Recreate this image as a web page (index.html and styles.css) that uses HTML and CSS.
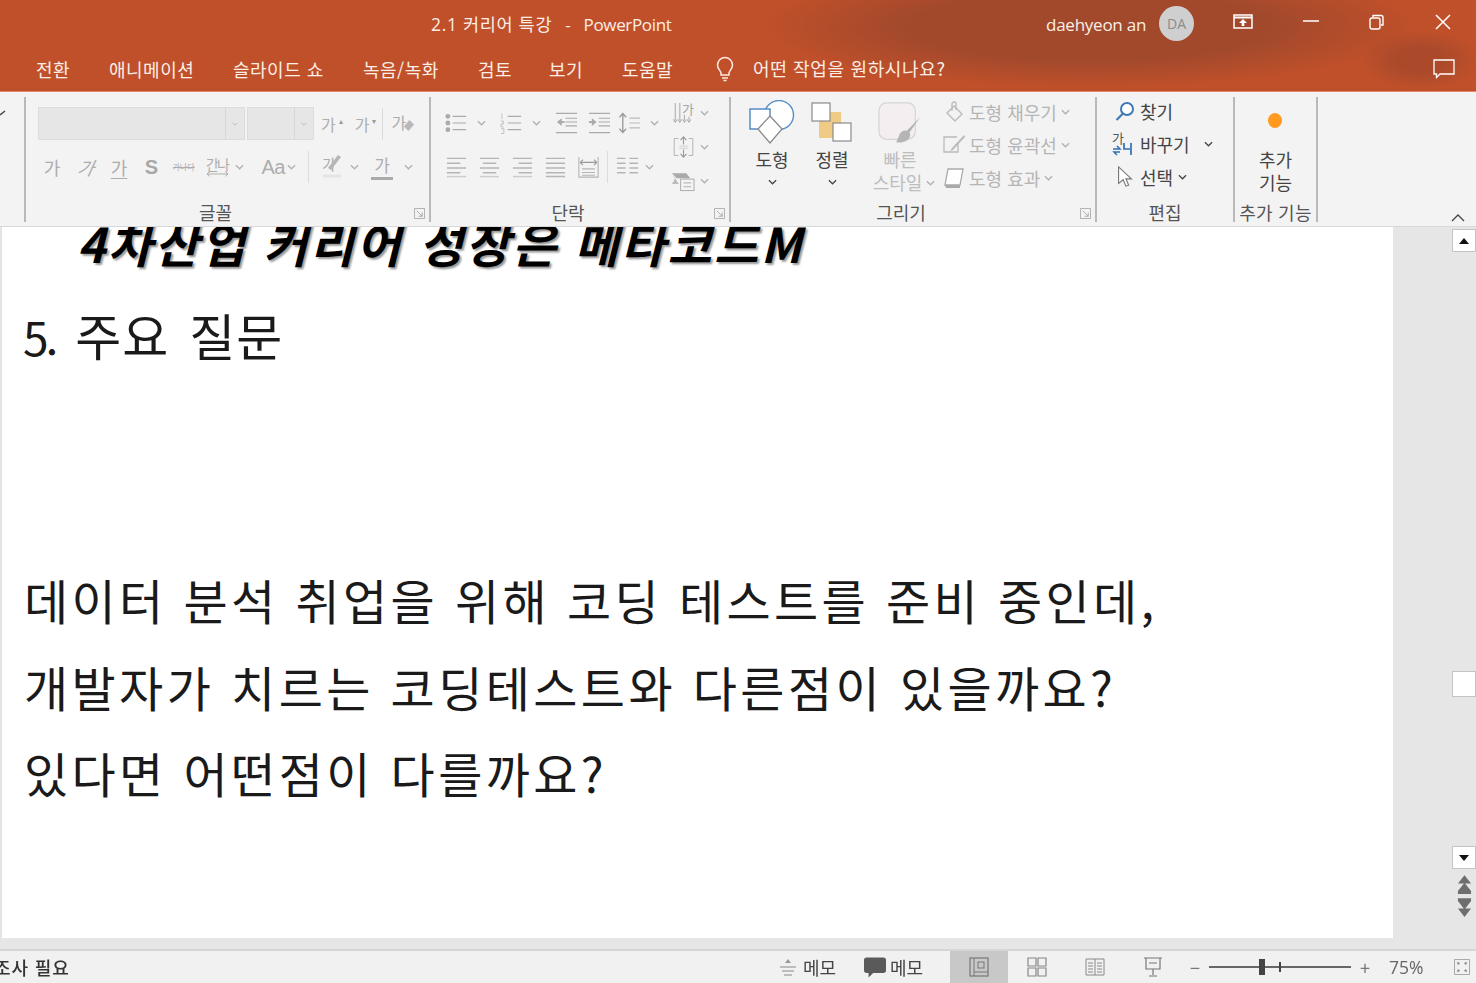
FILE: index.html
```html
<!DOCTYPE html>
<html lang="ko">
<head>
<meta charset="utf-8">
<title>2.1 커리어 특강 - PowerPoint</title>
<link rel="stylesheet" href="styles.css">
</head>
<body>
<svg class="defs" width="0" height="0" aria-hidden="true">
  <symbol id="chev" viewBox="0 0 10 6"><path d="M1 1l4 4 4-4" fill="none" stroke="currentColor" stroke-width="1.4"/></symbol>
  <symbol id="launch" viewBox="0 0 12 12"><path d="M.5.5h11v11M.5.5v11h11M3 3l6 6M9 5v4H5" fill="none" stroke="currentColor"/></symbol>
</svg>
<div class="app">
  <header class="head">
    <div class="titlebar">
      <div class="doc-title"><span class="doc-ko">2.1 커리어 특강</span> &nbsp;-&nbsp; PowerPoint</div>
      <div class="user-name">daehyeon an</div>
      <div class="avatar">DA</div>
      <svg class="win win-display" viewBox="0 0 20 16"><path d="M1 1h18v13H1z" fill="none" stroke="#fff" stroke-width="1.5"/><path d="M1 3.5h18" stroke="#fff" stroke-width="2"/><path d="M10 5l-4 4h2.700v3h2.600V9H14z" fill="#fff"/></svg>
      <svg class="win win-min" viewBox="0 0 16 16"><path d="M0 8h16" stroke="#fff" stroke-width="1.500"/></svg>
      <svg class="win win-restore" viewBox="0 0 16 16"><rect x="1" y="4" width="10" height="11" rx="2" fill="none" stroke="#fff" stroke-width="1.400"/><path d="M4 3.500V1.500h8a2 2 0 0 1 2 2V11h-2" fill="none" stroke="#fff" stroke-width="1.400"/></svg>
      <svg class="win win-close" viewBox="0 0 16 16"><path d="M1 1l14 14M15 1L1 15" stroke="#fff" stroke-width="1.500"/></svg>
    </div>
    <nav class="tabs">
      <span class="tab t1">전환</span>
      <span class="tab t2">애니메이션</span>
      <span class="tab t3">슬라이드 쇼</span>
      <span class="tab t4">녹음/녹화</span>
      <span class="tab t5">검토</span>
      <span class="tab t6">보기</span>
      <span class="tab t7">도움말</span>
      <svg class="bulb" viewBox="0 0 18 26"><path d="M9 1.500a7.500 7.500 0 0 0-7.500 7.500c0 3.500 2.500 5 3.500 8v2h8v-2c1-3 3.500-4.500 3.500-8A7.500 7.500 0 0 0 9 1.500z" fill="none" stroke="#fbe9df" stroke-width="1.500"/><path d="M6 22h6M7.500 24.500h3" stroke="#fbe9df" stroke-width="1.500"/></svg>
      <span class="tell">어떤 작업을 원하시나요?</span>
      <svg class="comment" viewBox="0 0 22 20"><path d="M1 1h20v14H7l-3.500 3.500V15H1z" fill="none" stroke="#fff" stroke-width="1.300"/></svg>
    </nav>
  </header>

  <section class="ribbon">
    <div class="group g-clip"><svg class="clip-mark" viewBox="0 0 6 6"><path d="M0 5l5-4" stroke="#444" stroke-width="1.500"/></svg></div>

    <div class="group g-font">
      <div class="font-row1">
        <div class="combo c-name"><span class="combo-drop"><svg class="chv tiny"><use href="#chev"/></svg></span></div>
        <div class="combo c-size"><span class="combo-drop"><svg class="chv tiny"><use href="#chev"/></svg></span></div>
        <span class="d gl fs1">가<i class="up">▴</i></span>
        <span class="d gl fs2">가<i class="up">▾</i></span>
        <span class="vsep short"></span>
        <span class="d gl eraser">가<svg viewBox="0 0 14 14" class="eraser-ic"><path d="M8 1l5 5-6 7-5-5z" fill="#b9b9b9"/></svg></span>
      </div>
      <div class="font-row2">
        <span class="d gl">가</span>
        <span class="d gl it">가</span>
        <span class="d gl un">가</span>
        <span class="d gl s-bold">S</span>
        <span class="d strike">가나다</span>
        <span class="d gl spacing">간나<svg viewBox="0 0 24 6" class="spacing-ar"><path d="M1 3h22M4 .5L1 3l3 2.500M20 .5L23 3l-3 2.500" fill="none" stroke="#aaa"/></svg></span>
        <svg class="chv"><use href="#chev"/></svg>
        <span class="d aa">Aa</span>
        <svg class="chv"><use href="#chev"/></svg>
        <span class="vsep tall"></span>
        <span class="d gl hl">가<svg viewBox="0 0 20 26" class="hl-ic"><path d="M15 2l3 2-10 13-3-2z" fill="#b5b5b5"/><path d="M0 23h18" stroke="#e4e4e4" stroke-width="3"/></svg></span>
        <svg class="chv"><use href="#chev"/></svg>
        <span class="d gl color">가<b class="color-bar"></b></span>
        <svg class="chv"><use href="#chev"/></svg>
      </div>
      <div class="glabel">글꼴</div>
      <svg class="launch"><use href="#launch"/></svg>
    </div>

    <div class="group g-para">
      <div class="para-left">
        <div class="para-row1">
          <svg class="ic" viewBox="0 0 24 22"><g fill="#aaa"><circle cx="3" cy="4" r="2.500"/><circle cx="3" cy="11" r="2.500"/><circle cx="3" cy="18" r="2.500"/></g><path d="M8 4h14M8 11h14M8 18h14" stroke="#aaa" stroke-width="1.300"/></svg>
          <svg class="chv"><use href="#chev"/></svg>
          <svg class="ic" viewBox="0 0 24 22"><path d="M8 4h14M8 11h14M8 18h14" stroke="#aaa" stroke-width="1.300"/><path d="M2 1v6M1 9h2.500v3H1v3h3M1 17h3v5H1" fill="none" stroke="#bbb" stroke-width=".9"/></svg>
          <svg class="chv"><use href="#chev"/></svg>
          <svg class="ic" viewBox="0 0 24 22"><path d="M1 1h22M11 6h12M11 10h12M11 14h12M1 21h22" stroke="#aaa" stroke-width="1.200"/><path d="M2 10l5-4v8z" fill="#aaa"/><path d="M6 10h4" stroke="#aaa" stroke-width="2"/></svg>
          <svg class="ic" viewBox="0 0 24 22"><path d="M1 1h22M11 6h12M11 10h12M11 14h12M1 21h22" stroke="#aaa" stroke-width="1.200"/><path d="M9 10L4 6v8z" fill="#aaa"/><path d="M1 10h4" stroke="#aaa" stroke-width="2"/></svg>
          <svg class="ic ic-ls" viewBox="0 0 24 24"><path d="M5 2v20M1.500 6L5 2l3.500 4M1.500 18L5 22l3.500-4" fill="none" stroke="#999" stroke-width="1.400"/><path d="M12 7h11M12 12h11M12 17h11" stroke="#bbb" stroke-width="1.300"/></svg>
          <svg class="chv"><use href="#chev"/></svg>
        </div>
        <div class="para-row2">
          <svg class="ic" viewBox="0 0 24 22"><path d="M2 2h20M2 7h14M2 12h20M2 17h14" stroke="#b5b5b5" stroke-width="1.500"/><path d="M2 21h20" stroke="#ccc" stroke-width="1.500"/></svg>
          <svg class="ic" viewBox="0 0 24 22"><path d="M2 2h20M5 7h14M2 12h20M5 17h14" stroke="#b5b5b5" stroke-width="1.500"/><path d="M2 21h20" stroke="#ccc" stroke-width="1.500"/></svg>
          <svg class="ic" viewBox="0 0 24 22"><path d="M2 2h20M8 7h14M2 12h20M8 17h14" stroke="#b5b5b5" stroke-width="1.500"/><path d="M2 21h20" stroke="#ccc" stroke-width="1.500"/></svg>
          <svg class="ic" viewBox="0 0 24 22"><path d="M2 2h20M2 7h20M2 12h20M2 17h20M2 21h20" stroke="#b5b5b5" stroke-width="1.500"/></svg>
          <svg class="ic" viewBox="0 0 24 24"><path d="M1.500 1v22h21V1M5 14h14M5 18h14M5 21h14" fill="none" stroke="#b5b5b5" stroke-width="1.200"/><path d="M3 7h18M6 4L3 7l3 3M18 4l3 3-3 3" fill="none" stroke="#999" stroke-width="1.200"/></svg>
          <span class="vsep tall"></span>
          <svg class="ic" viewBox="0 0 24 22"><path d="M1 2h9M1 7h9M1 12h9M1 17h9M14 2h9M14 7h9M14 12h9M14 17h9" stroke="#b5b5b5" stroke-width="1.500"/></svg>
          <svg class="chv"><use href="#chev"/></svg>
        </div>
      </div>
      <div class="para-right">
        <div class="pr-item">
          <span class="textdir"><svg viewBox="0 0 24 24" class="ic"><path d="M3 1v19M8 1v19M13 14v6M18 16v4M1 19l2 3 2-3M6 19l2 3 2-3M11 19l2 3 2-3M16 19l2 3 2-3" fill="none" stroke="#aaa" stroke-width="1.100"/></svg><em class="td-g">가</em></span>
          <svg class="chv"><use href="#chev"/></svg>
        </div>
        <div class="pr-item">
          <svg class="ic" viewBox="0 0 24 26"><path d="M6 3H1v20h5M18 3h5v20h-5" fill="none" stroke="#b0b0b0" stroke-width="1.100"/><path d="M12 1v9M8.500 5L12 1l3.500 4M12 16v9M8.500 21l3.500 4 3.500-4" fill="none" stroke="#999" stroke-width="1.300"/><path d="M7 12h10M7 14.500h10" stroke="#ccc"/></svg>
          <svg class="chv"><use href="#chev"/></svg>
        </div>
        <div class="pr-item">
          <svg class="ic" viewBox="0 0 24 22"><path d="M0 3h15l4 5H5z" fill="#aaa"/><path d="M0 3l3 6-3 5h7" fill="#bbb"/><rect x="9" y="9" width="14" height="12" fill="#f3f3f3" stroke="#aaa"/><path d="M12 13h8M12 17h8" stroke="#aaa"/></svg>
          <svg class="chv"><use href="#chev"/></svg>
        </div>
      </div>
      <div class="glabel">단락</div>
      <svg class="launch"><use href="#launch"/></svg>
    </div>

    <div class="group g-draw">
      <div class="big b-shape">
        <svg class="big-ic" viewBox="0 0 46 44"><circle cx="30" cy="15" r="14.500" fill="#fff" stroke="#5b8fc7" stroke-width="1.400"/><rect x="1" y="9" width="20" height="20" fill="#fff" stroke="#4a86c5" stroke-width="1.400"/><path d="M21 16l12 13-12 14L9 29z" fill="#fff" stroke="#8a8a8a" stroke-width="1.300"/></svg>
        <span class="big-t">도형</span>
        <svg class="chv dark"><use href="#chev"/></svg>
      </div>
      <div class="big b-arr">
        <svg class="big-ic" viewBox="0 0 42 42"><rect x="8" y="10" width="22" height="26" fill="#efcb85"/><rect x="1" y="1" width="18" height="18" fill="#fff" stroke="#8a8a8a" stroke-width="1.200"/><rect x="22" y="21" width="18" height="18" fill="#fff" stroke="#8a8a8a" stroke-width="1.200"/></svg>
        <span class="big-t">정렬</span>
        <svg class="chv dark"><use href="#chev"/></svg>
      </div>
      <div class="big b-style">
        <svg class="big-ic" viewBox="0 0 46 46"><rect x="1" y="1" width="38" height="38" rx="8" fill="#f5eef0" stroke="#d5d5d5" stroke-width="1.300"/><path d="M44 16L30 30c-3-1-6 1-7 3l-4 9c6 1 12-1 14-5 1-2 1-3 0-5z" fill="#b5b5b5"/></svg>
        <span class="big-t off">빠른</span>
        <span class="big-t off st2">스타일<svg class="chv inl"><use href="#chev"/></svg></span>
      </div>
      <div class="draw-list">
        <div class="dl-item">
          <svg class="dl-ic" viewBox="0 0 22 22"><path d="M11 5l8 8-7 7-8-8z" fill="none" stroke="#bbb" stroke-width="1.400"/><path d="M9 10V3a2 2 0 0 1 4 0v6" fill="none" stroke="#bbb" stroke-width="1.300"/></svg>
          <span>도형 채우기</span><svg class="chv"><use href="#chev"/></svg>
        </div>
        <div class="dl-item">
          <svg class="dl-ic" viewBox="0 0 22 22"><path d="M14 3H1v15h14V9" fill="none" stroke="#bbb" stroke-width="1.300"/><path d="M21 1L9 14l-2 3 3-1L22 3z" fill="#bbb"/></svg>
          <span>도형 윤곽선</span><svg class="chv"><use href="#chev"/></svg>
        </div>
        <div class="dl-item">
          <svg class="dl-ic" viewBox="0 0 22 22"><path d="M5 2h15l-3 16H2z" fill="#fff" stroke="#aaa" stroke-width="1.300"/><path d="M2 18h15v3H3z" fill="#aaa"/></svg>
          <span>도형 효과</span><svg class="chv"><use href="#chev"/></svg>
        </div>
      </div>
      <div class="glabel">그리기</div>
      <svg class="launch"><use href="#launch"/></svg>
    </div>

    <div class="group g-edit">
      <div class="ed-item">
        <svg class="ed-ic" viewBox="0 0 20 20"><circle cx="12" cy="8" r="6" fill="#fff" stroke="#3f78b5" stroke-width="2"/><path d="M8 12.500L1.500 19" stroke="#3f78b5" stroke-width="2.200"/></svg>
        <span>찾기</span>
      </div>
      <div class="ed-item">
        <span class="repl"><em class="repl-g">가</em><svg class="repl-a" viewBox="0 0 22 14"><path d="M1 7h7L5 4M8 10H2l3 3" fill="none" stroke="#2f6fb5" stroke-width="1.500"/><path d="M12 1v6h6M19 1v12" fill="none" stroke="#2f6fb5" stroke-width="1.700"/></svg></span>
        <span>바꾸기</span><svg class="chv dark gap-l"><use href="#chev"/></svg>
      </div>
      <div class="ed-item">
        <svg class="ed-ic" viewBox="0 0 20 24"><path d="M3 1v18l5-4 3 7 3-1-3-7h6z" fill="#fff" stroke="#777" stroke-width="1.200"/></svg>
        <span>선택</span><svg class="chv dark"><use href="#chev"/></svg>
      </div>
      <div class="glabel">편집</div>
    </div>

    <div class="group g-add">
      <span class="dot"></span>
      <span class="add-t">추가</span>
      <span class="add-t">기능</span>
      <div class="glabel">추가 기능</div>
    </div>

    <svg class="collapse" viewBox="0 0 14 8"><path d="M1 7l6-6 6 6" fill="none" stroke="#444" stroke-width="1.300"/></svg>
  </section>

  <main class="work">
    <article class="slide">
      <h1 class="slide-head">4차산업 커리어 성장은 메타코드M</h1>
      <h2 class="slide-sub"><span class="num">5.</span> 주요 질문</h2>
      <div class="slide-body">
        <p>데이터 분석 취업을 위해 코딩 테스트를 준비 중인데,</p>
        <p>개발자가 치르는 코딩테스트와 다른점이 있을까요?</p>
        <p>있다면 어떤점이 다를까요?</p>
      </div>
    </article>
    <div class="scroll">
      <div class="sb-btn"><i class="tri-up"></i></div>
      <div class="sb-track"><div class="sb-thumb"></div></div>
      <div class="sb-btn"><i class="tri-down"></i></div>
      <svg class="sb-page" viewBox="0 0 16 20"><path d="M8 0l7 9H1zM8 8l7 9v3H1v-3z" fill="#6e6e6e"/></svg>
      <svg class="sb-page" viewBox="0 0 16 20"><path d="M1 0h14v3L8 12 1 3zM1 11h14l-7 9z" fill="#6e6e6e"/></svg>
    </div>
  </main>

  <footer class="status">
    <span class="st-left">조사 필요</span>
    <svg class="st-ic notes" viewBox="0 0 18 18"><path d="M9 1l3 4H6z" fill="#999"/><path d="M1 9h16M3 13h12M5 17h8" stroke="#aaa" stroke-width="1.300"/></svg>
    <span class="st-t">메모</span>
    <svg class="st-ic bubble" viewBox="0 0 24 22"><path d="M3 0h18a3 3 0 0 1 3 3v11a3 3 0 0 1-3 3H10l-5 5v-5H3a3 3 0 0 1-3-3V3a3 3 0 0 1 3-3z" fill="#5a5a5a"/></svg>
    <span class="st-t">메모</span>
    <span class="view active"><svg viewBox="0 0 20 20"><rect x="1" y="1" width="18" height="18" fill="none" stroke="#777" stroke-width="1.200"/><path d="M5 1v18M5 15h14" stroke="#777"/><rect x="9" y="5" width="6" height="6" fill="none" stroke="#777"/></svg></span>
    <span class="view"><svg viewBox="0 0 20 20"><path d="M1 1h8v8H1zM11 1h8v8h-8zM1 11h8v8H1zM11 11h8v8h-8z" fill="none" stroke="#888" stroke-width="1.200"/></svg></span>
    <span class="view"><svg viewBox="0 0 20 20"><path d="M1 2h18v16H1zM10 2v16M3 6h5M3 9h5M3 12h5M3 15h5M12 6h5M12 9h5M12 12h5M12 15h5" fill="none" stroke="#888"/></svg></span>
    <span class="view"><svg viewBox="0 0 20 20"><path d="M1 1h18M3 1v11h14V1M10 12v6M6 19h8M6 6h8" fill="none" stroke="#777" stroke-width="1.200"/></svg></span>
    <span class="zm-btn z-minus">−</span>
    <div class="zoom-slider"><i class="zs-tick"></i><i class="zs-thumb"></i></div>
    <span class="zm-btn">+</span>
    <span class="zoom-pct">75%</span>
    <svg class="fit" viewBox="0 0 16 16"><path d="M.5.5h15v15H.5z" fill="none" stroke="#aaa"/><path d="M3 3l3 1-2 2zM13 3l-1 3-2-2zM3 13l1-3 2 2zM13 13l-3-1 2-2z" fill="#777"/></svg>
  </footer>
</div>
</body>
</html>
```

FILE: styles.css
```css
* { box-sizing: border-box; }
html, body { margin: 0; height: 100%; overflow: hidden; background: #e6e6e6; }
body { font-family: "Noto Sans CJK KR", "Noto Sans", sans-serif; color: #444; }
.defs { display: block; width: 0; height: 0; }
i, em { font-style: normal; }
.app { width: 1476px; height: 983px; display: flex; flex-direction: column; filter: blur(.45px); }

.head {
  height: 92px; color: #fbeee7;
  background:
    radial-gradient(ellipse 330px 62px at 1090px 26px, #a2492c 0 55%, transparent 100%),
    radial-gradient(ellipse 60px 30px at 1420px 60px, #aa4a2b 0 40%, transparent 100%),
    #c0502a;
  border-bottom: 1px solid #e08a68;
}
.titlebar { height: 47px; display: flex; align-items: center; padding-left: 431px; }
.doc-title { font: 400 17px/20px "Open Sans", "Noto Sans CJK KR", sans-serif; letter-spacing: -.35px; word-spacing: 2.500px; width: 615px; white-space: nowrap; margin-top: 2px; }
.doc-ko { letter-spacing: .7px; font-size: 17.500px; word-spacing: 0; }
.user-name { font: 400 17px/20px "Open Sans", sans-serif; letter-spacing: -.25px; width: 113px; white-space: nowrap; margin-top: 3px; }
.avatar { width: 35px; height: 35px; border-radius: 50%; background: #cfcfcf; color: #8b8b8b; font: 400 14px/35px "Open Sans", sans-serif; text-align: center; flex: none; }
.win { flex: none; }
.win-display { width: 20px; height: 16px; margin-left: 39px; margin-top: -4px; }
.win-min { width: 16px; height: 16px; margin-left: 50px; margin-top: -6px; }
.win-restore { width: 16px; height: 16px; margin-left: 50px; margin-top: -4px; }
.win-close { width: 16px; height: 16px; margin-left: 50px; margin-top: -4px; }

.tabs { height: 44px; display: flex; align-items: center; padding-left: 36px; padding-bottom: 1px; font-size: 18px; white-space: nowrap; }
.tab { flex: none; letter-spacing: .5px; }
.t1 { width: 73px; } .t2 { width: 124px; } .t3 { width: 130px; } .t4 { width: 115px; }
.t5 { width: 71px; } .t6 { width: 73px; } .t7 { width: 94px; }
.bulb { width: 18px; height: 26px; flex: none; margin-right: 19px; }
.tell { width: 680px; flex: none; font-size: 18px; letter-spacing: .65px; margin-top: -2px; }
.comment { width: 22px; height: 20px; flex: none; }

.ribbon { height: 135px; background: #f3f3f3; border-bottom: 1px solid #d8d8d8; display: flex; position: relative; padding-top: 5px; }
.group { position: relative; height: 125px; border-right: 2px solid #b9b9b9; flex: none; }
.g-clip { width: 26px; }
.clip-mark { width: 6px; height: 6px; display: block; margin-top: 13px; }
.g-font { width: 405px; padding: 10px 0 0 12px; }
.g-para { width: 300px; display: flex; padding: 13px 0 0 15px; }
.g-draw { width: 366px; display: flex; padding-left: 18px; }
.g-edit { width: 138px; padding: 0 0 0 18px; }
.g-add { width: 83px; display: flex; flex-direction: column; align-items: center; padding-top: 16px; }
.glabel { position: absolute; left: 0; right: 24px; bottom: -1px; text-align: center; font-size: 18px; line-height: 22px; color: #555; pointer-events: none; }
.g-edit .glabel { right: 0; }
.g-add .glabel { right: 0; white-space: nowrap; letter-spacing: .2px; }
.launch { position: absolute; right: 4px; bottom: 3px; width: 11px; height: 11px; color: #aaa; }
.chv { width: 9px; height: 6px; color: #b0b0b0; flex: none; }
.chv.dark { color: #444; }
.chv.tiny { width: 6px; height: 4px; }
.d { color: #adadad; }
.gl { font-size: 18px; line-height: 24px; position: relative; display: inline-block; }
.vsep { width: 1px; background: #dcdcdc; flex: none; display: block; }
.vsep.short { height: 32px; }
.vsep.tall { height: 32px; }

.font-row1 { display: flex; align-items: center; height: 33px; }
.combo { height: 33px; background: #e6e6e6; border: 1px solid #dcdcdc; display: flex; justify-content: flex-end; flex: none; }
.c-name { width: 207px; margin-right: 2px; }
.c-size { width: 67px; }
.combo-drop { width: 19px; border-left: 1px solid #d6d6d6; display: flex; align-items: center; justify-content: center; }
.up { position: absolute; top: -3px; right: -7px; font-size: 8px; color: #999; }
.fs1 { margin-left: 7px; margin-right: 19px; font-size: 16px; }
.fs2 { margin-right: 13px; font-size: 16px; }
.eraser { margin-left: 8px; margin-top: -4px; font-size: 16px; }
.eraser-ic { position: absolute; width: 13px; height: 13px; left: 11px; top: 9px; }

.font-row2 { display: grid; grid-template-columns: 34px 34px 32px 33px 33px 32px 12px 40px 12px 22px 20px 30px 26px 26px; justify-items: center; align-items: center; margin-top: 11px; height: 32px; margin-left: -3px; width: 400px; }
.it { font-style: italic; transform: skewX(-12deg); }
.un { text-decoration: underline; text-underline-offset: 3px; }
.s-bold { font: 700 20px/24px "Liberation Sans", sans-serif; color: #a8a8a8; }
.strike { font-size: 8px; text-decoration: line-through; line-height: 12px; width: 24px; white-space: nowrap; overflow: hidden; }
.spacing { font-size: 14px; line-height: 14px; letter-spacing: -2px; margin-top: -7px; white-space: nowrap; }
.spacing-ar { position: absolute; left: 0; bottom: -6px; width: 23px; height: 6px; }
.aa { font: 400 20px/24px "Liberation Sans", sans-serif; letter-spacing: -.5px; justify-self: end; }
.hl { font-size: 15px; margin-top: -6px; }
.hl-ic { position: absolute; left: 1px; top: 1px; width: 20px; height: 26px; }
.color { font-size: 17px; line-height: 22px; margin-top: -4px; }
.color-bar { position: absolute; left: -3px; right: -3px; bottom: -4px; height: 3px; background: #aaa; }

.ic { width: 23px; height: 22px; flex: none; display: block; }
.ic-ls { height: 24px; }
.para-left { width: 224px; flex: none; }
.para-row1 { display: grid; grid-template-columns: 26px 24px 36px 14px 46px 20px 40px 10px; justify-items: center; align-items: center; height: 26px; margin-left: -3px; }
.para-row2 { display: grid; grid-template-columns: 26px 40px 26px 40px 26px 12px 28px 16px; justify-items: center; align-items: center; height: 26px; margin-top: 15px; margin-left: -3px; }
.para-right { display: flex; flex-direction: column; margin-left: 2px; margin-top: -14px; }
.pr-item { display: flex; align-items: center; gap: 5px; height: 34px; }
.textdir { position: relative; display: block; }
.td-g { position: absolute; right: 1px; top: -3px; font-size: 13px; color: #a5a5a5; }

.big { display: flex; flex-direction: column; align-items: center; flex: none; position: relative; }
.big-t { font-size: 18px; line-height: 23px; color: #444; white-space: nowrap; }
.big-t.off { color: #bdbdbd; }
.big-ic { display: block; flex: none; }
.b-shape { width: 46px; padding-top: 3px; }
.b-shape .big-ic { width: 46px; height: 44px; }
.b-shape .big-t { margin-top: 4px; }
.b-shape .chv { margin-top: 8px; }
.b-arr { width: 42px; margin-left: 16px; padding-top: 5px; }
.b-arr .big-ic { width: 42px; height: 42px; }
.b-arr .big-t { margin-top: 4px; }
.b-arr .chv { margin-top: 8px; }
.b-style { width: 60px; margin-left: 17px; padding-top: 5px; }
.b-style .big-ic { width: 44px; height: 44px; margin-bottom: 2px; }
.st2 { display: flex; align-items: center; gap: 4px; margin-left: 8px; }
.draw-list { margin-left: 13px; margin-top: -2px; }
.dl-item { display: flex; align-items: center; height: 33px; color: #b5b5b5; font-size: 18px; white-space: nowrap; gap: 4px; }
.dl-ic { width: 22px; height: 22px; flex: none; }

.ed-item { display: flex; align-items: center; height: 33px; font-size: 18px; color: #444; gap: 5px; white-space: nowrap; }
.ed-item:first-child { margin-top: -3px; }
.ed-ic { width: 20px; height: 22px; flex: none; }
.repl { display: block; width: 22px; height: 24px; position: relative; flex: none; margin-left: -3px; margin-right: 1px; }
.repl-g { position: absolute; left: 0; top: -3px; font-size: 13px; color: #555; line-height: 18px; }
.repl-a { position: absolute; left: 0; bottom: 0; width: 22px; height: 14px; }
.gap-l { margin-left: 9px; }
.dot { width: 14px; height: 15px; border-radius: 50%; background: #ff9a1f; flex: none; margin: 0 0 0 -2px; }
.add-t { font-size: 18px; line-height: 23px; color: #444; }
.dot + .add-t { margin-top: 20px; }
.collapse { position: absolute; right: 11px; bottom: 4px; width: 14px; height: 8px; }

.work { height: 722px; display: flex; background: #e6e6e6; flex: none; }
.slide { width: 1393px; height: 711px; background: #fff; border-left: 2px solid #e4e4e4; overflow: hidden; color: #111; flex: none; }
.slide-head { margin: -15px 0 0 75px; font-size: 48px; line-height: 60px; font-weight: 700; font-style: italic; letter-spacing: 2.400px; color: #000; text-shadow: 2px 2px 2px #999; white-space: nowrap; }
.slide-sub { margin: 28px 0 0 21px; font-size: 50px; line-height: 68px; font-weight: 400; letter-spacing: 1px; color: #1a1a1a; word-spacing: 5px; }
.num { font-size: 46px; letter-spacing: -3px; }
.slide-body { margin-top: 186px; padding-left: 22px; }
.slide-body p { margin: 0; font-size: 48px; line-height: 86.500px; color: #1a1a1a; letter-spacing: 3.400px; white-space: nowrap; }

.scroll { margin-left: auto; width: 24px; display: flex; flex-direction: column; align-items: center; padding-top: 2px; }
.sb-btn { width: 24px; height: 23px; background: #fff; border: 1px solid #c4c4c4; display: flex; align-items: center; justify-content: center; flex: none; }
.tri-up, .tri-down { width: 0; height: 0; border-left: 5px solid transparent; border-right: 5px solid transparent; }
.tri-up { border-bottom: 6px solid #111; }
.tri-down { border-top: 6px solid #111; }
.sb-track { height: 594px; width: 24px; padding-top: 419px; flex: none; }
.sb-thumb { width: 24px; height: 26px; background: #fff; border: 1px solid #c4c4c4; }
.sb-page { width: 15px; height: 19px; flex: none; margin-top: 4px; }
.sb-btn + .sb-page { margin-top: 6px; }

.status { height: 34px; flex: none; background: #f1f1f1; border-top: 2px solid #d6d6d6; display: flex; align-items: center; font-size: 18px; color: #444; position: relative; }
.st-left { margin-left: -6px; width: 785px; flex: none; color: #333; font-weight: 500; letter-spacing: .9px; }
.st-ic { flex: none; }
.notes { width: 18px; height: 18px; margin-right: 6px; }
.st-t { flex: none; width: 33px; white-space: nowrap; }
.bubble { width: 22px; height: 21px; margin-left: 28px; margin-right: 4px; }
.view { width: 58px; height: 32px; display: flex; align-items: center; justify-content: center; flex: none; }
.view svg { width: 20px; height: 20px; }
.view.active { background: #c8c8c8; margin-left: 27px; }
.zm-btn { width: 12px; text-align: center; color: #777; flex: none; font-size: 18px; line-height: 20px; }
.z-minus { margin-left: 7px; }
.zoom-slider { position: relative; width: 142px; height: 2px; background: #666; margin: 0 8px; flex: none; }
.zs-thumb { position: absolute; left: 50px; top: -7px; width: 6px; height: 16px; background: #444; }
.zs-tick { position: absolute; left: 70px; top: -4px; width: 2px; height: 10px; background: #444; }
.zoom-pct { margin-left: 18px; width: 56px; flex: none; color: #666; font: 400 17.500px/20px "Open Sans", sans-serif; }
.fit { width: 16px; height: 16px; flex: none; margin-left: 9px; }
```
